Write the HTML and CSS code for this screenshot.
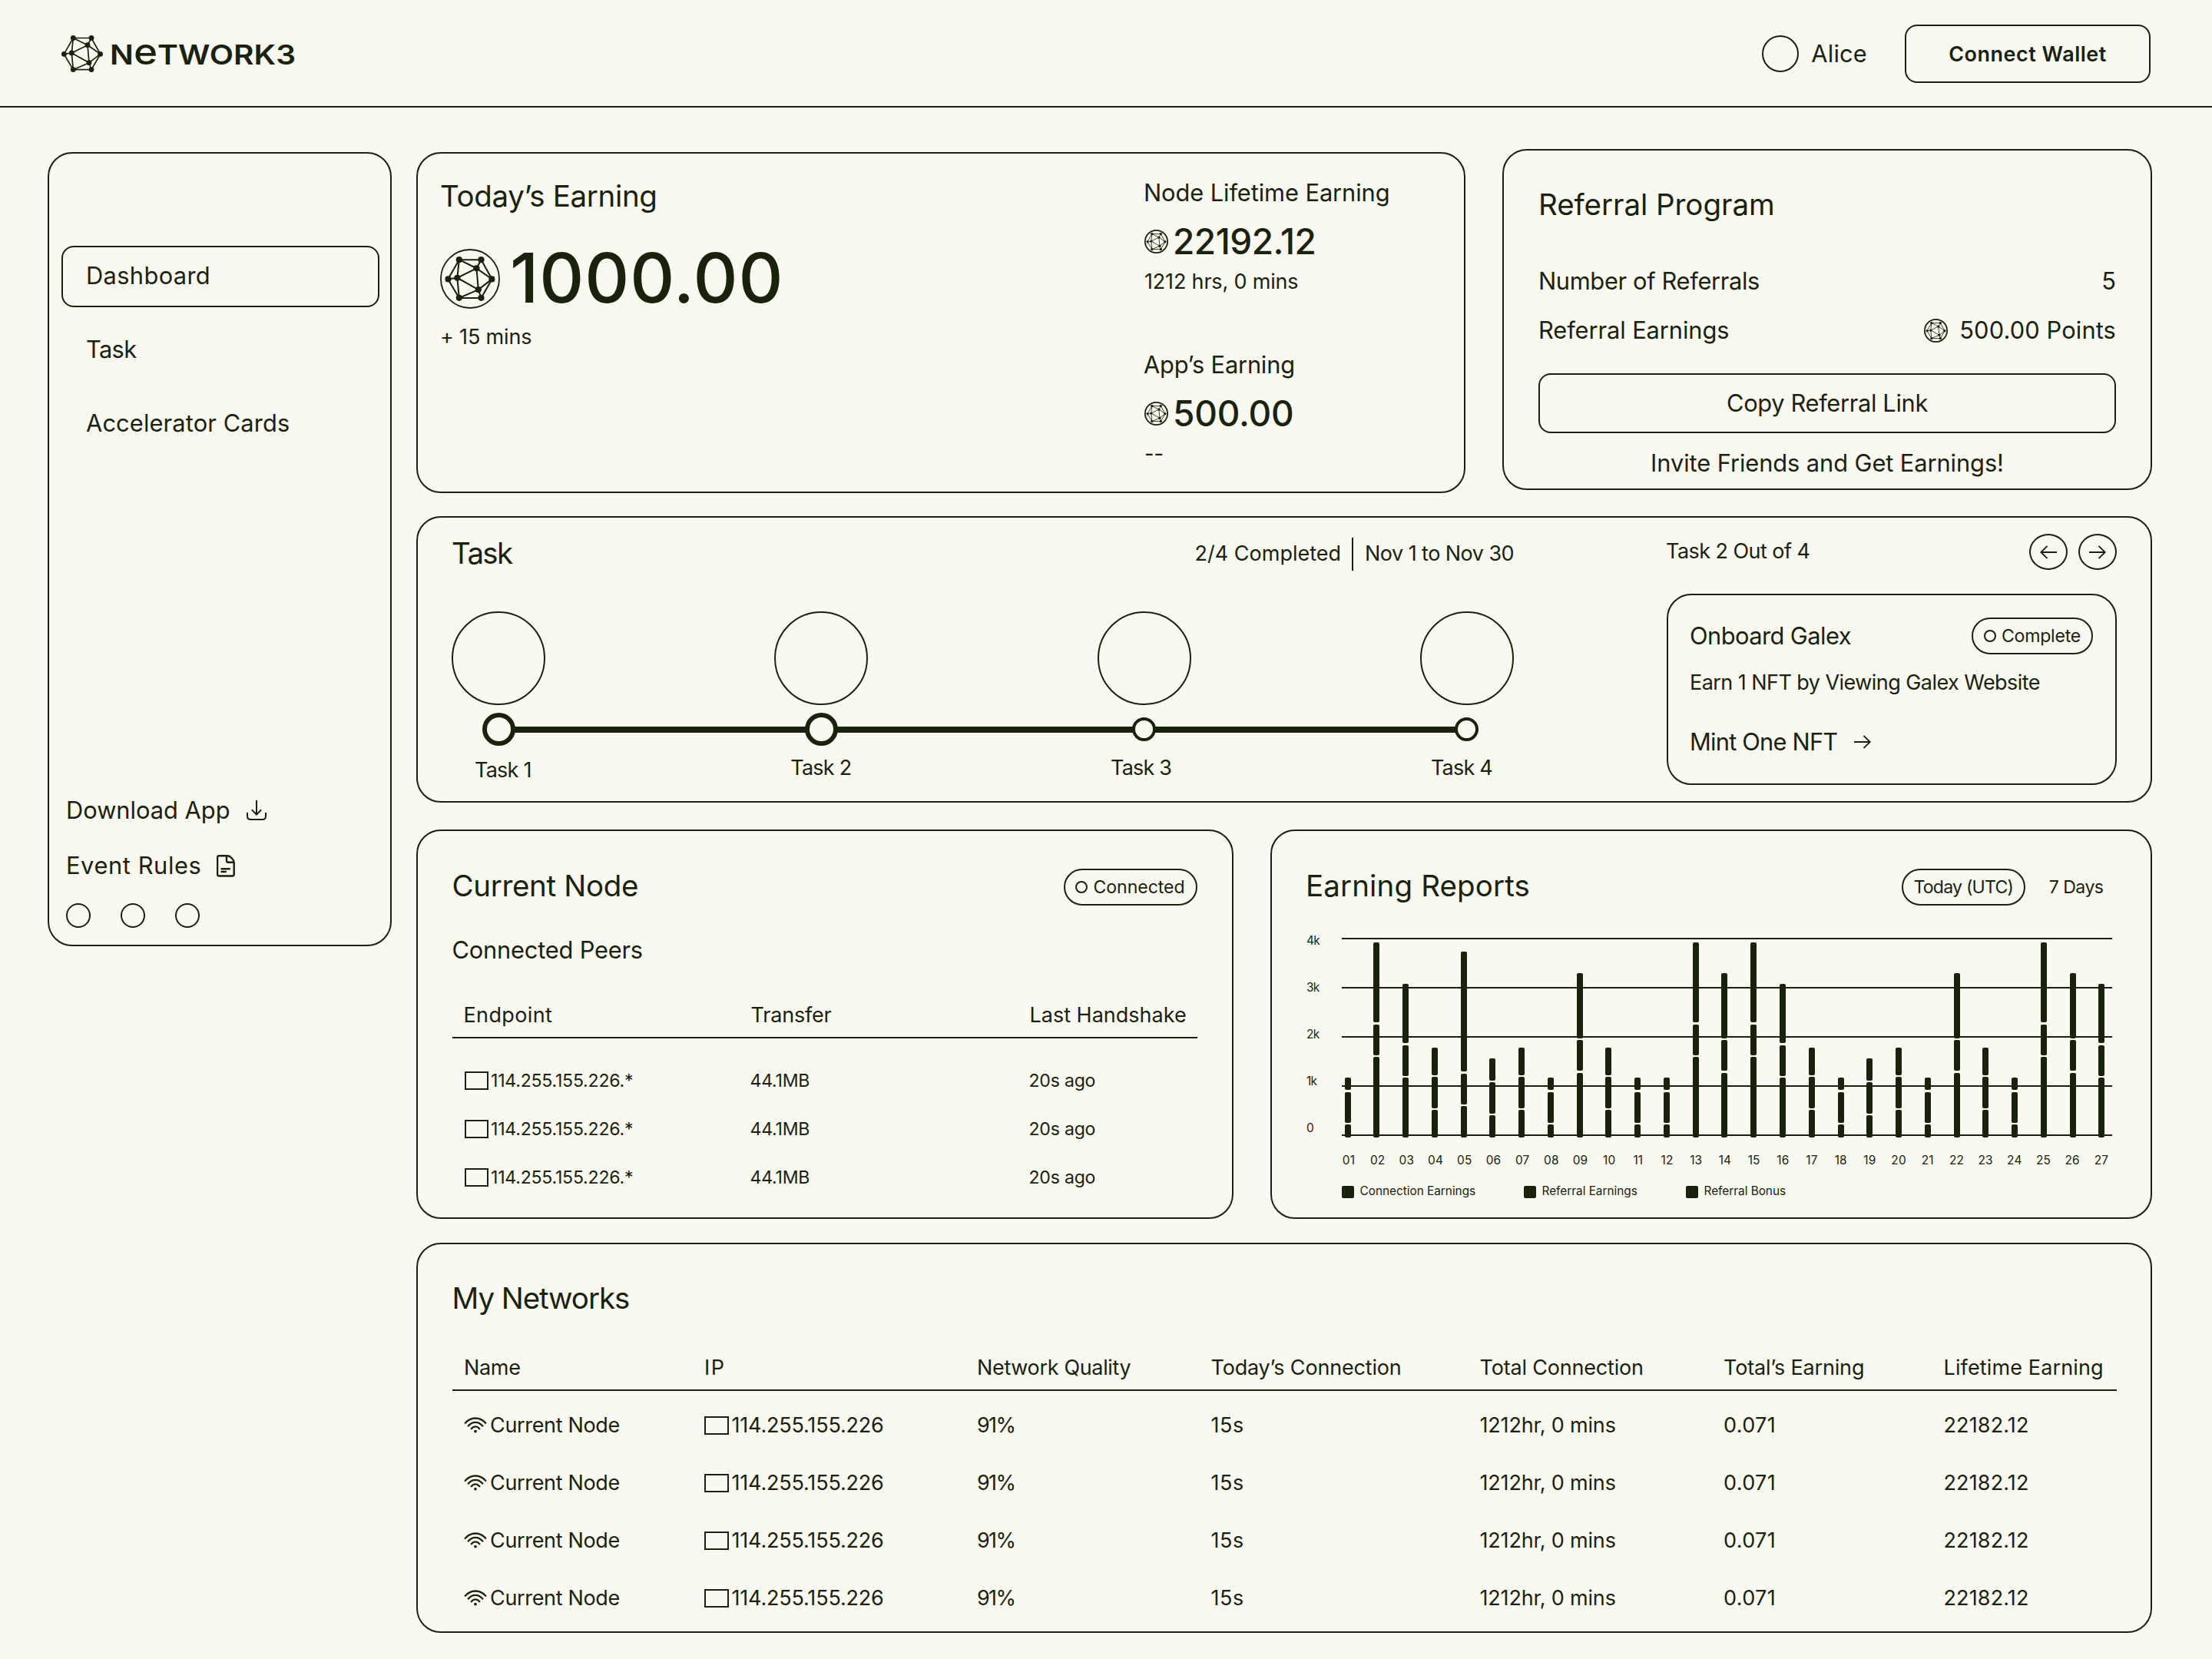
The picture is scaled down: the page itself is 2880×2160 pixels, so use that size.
FILE: index.html
```html
<!DOCTYPE html>
<html lang="en">
<head>
<meta charset="utf-8">
<title>Network3 Dashboard</title>
<link rel="stylesheet" href="styles.css">
</head>
<body>
<svg class="defs" width="0" height="0" aria-hidden="true">
  <defs>
    <symbol id="mesh" viewBox="0 0 54 48">
      <g fill="none" stroke="currentColor" stroke-width="1.7">
        <path d="M15.3 3.5H39L50.7 24.4 39 44.7H15.3L3.3 24.4Z"/>
        <path d="M15.3 3.5L34 12.7 39 3.5M34 12.7L50.7 24.4 36 35.7 34 12.7 13.3 23 36 35.7 39 44.7M36 35.7L15.3 44.7 13.3 23 3.3 24.4M13.3 23L15.3 3.5"/>
      </g>
      <g fill="currentColor">
        <circle cx="15.3" cy="3.5" r="3.4"/><circle cx="39" cy="3.5" r="3.4"/><circle cx="3.4" cy="24.4" r="3.4"/><circle cx="50.6" cy="24.4" r="3.4"/><circle cx="15.3" cy="44.6" r="3.4"/><circle cx="39" cy="44.6" r="3.4"/><circle cx="34" cy="12.7" r="3.4"/><circle cx="13.3" cy="23" r="3.4"/><circle cx="36" cy="35.7" r="3.4"/>
      </g>
    </symbol>
    <symbol id="coin" viewBox="0 0 78 78">
      <circle cx="39" cy="39" r="38" fill="none" stroke="currentColor" stroke-width="1.8"/>
      <use href="#mesh" x="6.3" y="9.9" width="65.3" height="58.1"/>
    </symbol>
    <symbol id="coin-small" viewBox="0 0 31 31">
      <circle cx="15.5" cy="15.5" r="14.6" fill="none" stroke="currentColor" stroke-width="1.8"/>
      <use href="#mesh" x="2.4" y="3.9" width="26.2" height="23.3"/>
    </symbol>
    <symbol id="arrow-right" viewBox="0 0 22 18">
      <path d="M0 9H20.5M12.5 .8L20.7 9 12.5 17.2" fill="none" stroke="currentColor" stroke-width="1.9"/>
    </symbol>
    <symbol id="arrow-left" viewBox="0 0 22 18">
      <path d="M22 9H1.5M9.5 .8L1.3 9 9.5 17.2" fill="none" stroke="currentColor" stroke-width="1.9"/>
    </symbol>
    <symbol id="wifi" viewBox="0 0 29 21">
      <g fill="none" stroke="currentColor" stroke-width="2.3" stroke-linecap="round">
        <path d="M1.3 7.8C8.5-.6 20.5-.6 27.7 7.8"/>
        <path d="M5.2 11.6C10.5 5.2 18.5 5.2 23.8 11.6"/>
        <path d="M9.2 15.2C12.3 11.4 16.7 11.4 19.8 15.2"/>
      </g>
      <circle cx="14.5" cy="18.6" r="1.9" fill="currentColor"/>
    </symbol>
  </defs>
</svg>

<header class="topbar">
  <a class="brand">
    <svg class="brand-mark"><use href="#mesh"/></svg>
    <span class="brand-name">N<span class="brand-e">e</span>TWORK3</span>
  </a>
  <div class="account">
    <span class="avatar"></span>
    <span class="s32 user">Alice</span>
    <button class="btn wallet">Connect Wallet</button>
  </div>
</header>

<div class="page">
  <aside class="sidebar">
    <nav class="nav">
      <a class="nav-item active s32 wide-3">Dashboard</a>
      <a class="nav-item s32 tight-6">Task</a>
      <a class="nav-item s32 wide-1">Accelerator Cards</a>
    </nav>
    <div class="side-foot">
      <a class="side-link s32 track-0">Download App
        <svg class="icon-dl" viewBox="0 0 26 26"><path d="M13 0V18.5M6.8 12.2L13 18.6 19.2 12.2M1 16V20.5Q1 25 5.5 25H20.5Q25 25 25 20.5V16" fill="none" stroke="currentColor" stroke-width="2"/></svg>
      </a>
      <a class="side-link s32 wide-5">Event Rules
        <svg class="icon-doc" viewBox="0 0 24 29"><path d="M3.2 1.2H14.5C17.5 1.2 22.7 6.5 22.7 10V25.3Q22.7 27.5 20.5 27.5H3.2Q1.1 27.5 1.1 25.3V3.3Q1.1 1.2 3.2 1.2ZM13 1.2V7.6Q13 9.8 15.2 9.8H22.5M6.5 18.2H16.8M6.5 22H11.8" fill="none" stroke="currentColor" stroke-width="2.4" stroke-linecap="round"/></svg>
      </a>
      <div class="socials"><i></i><i></i><i></i></div>
    </div>
  </aside>

  <main class="main">
    <div class="row-top">
      <section class="card earning">
        <div class="earning-main">
          <h2 class="s40 tight-3">Today’s Earning</h2>
          <div class="big"><svg class="coin-lg"><use href="#coin"/></svg><span class="s96">1000.00</span></div>
          <p class="s28">+ 15 mins</p>
        </div>
        <div class="earning-side">
          <div class="stat">
            <h3 class="s32">Node Lifetime Earning</h3>
            <div class="value"><svg class="coin-sm"><use href="#coin-small"/></svg><span class="s48">22192.12</span></div>
            <p class="s28">1212 hrs, 0 mins</p>
          </div>
          <div class="stat">
            <h3 class="s32 tight-2">App’s Earning</h3>
            <div class="value"><svg class="coin-sm"><use href="#coin-small"/></svg><span class="s48 tight-2">500.00</span></div>
            <p class="s28 track-0">--</p>
          </div>
        </div>
      </section>

      <section class="card referral">
        <h2 class="s40">Referral Program</h2>
        <div class="pair s32"><span class="tight-3">Number of Referrals</span><span class="track-0">5</span></div>
        <div class="pair pair-2 s32"><span>Referral Earnings</span><span class="points"><svg class="coin-sm"><use href="#coin-small"/></svg><span class="wide-1">500.00 Points</span></span></div>
        <button class="btn copy s32 tight-3">Copy Referral Link</button>
        <p class="invite s32">Invite Friends and Get Earnings!</p>
      </section>
    </div>

    <section class="card tasks">
      <div class="progress">
        <div class="progress-head">
          <h2 class="s40 tight-16">Task</h2>
          <div class="meta s28"><span class="track-0">2/4 Completed</span><i class="divider"></i><span class="tight-5">Nov 1 to Nov 30</span></div>
        </div>
        <div class="steps">
          <div class="step"><i class="disc"></i><i class="node done"></i></div>
          <div class="step"><i class="disc"></i><i class="node done"></i></div>
          <div class="step"><i class="disc"></i><i class="node"></i></div>
          <div class="step"><i class="disc"></i><i class="node"></i></div>
        </div>
        <div class="labels s28 tight-8"><span>Task 1</span><span>Task 2</span><span>Task 3</span><span>Task 4</span></div>
      </div>
      <div class="current">
        <div class="current-head">
          <span class="s28 tight-5">Task 2 Out of 4</span>
          <div class="arrows">
            <button class="round"><svg class="arrow"><use href="#arrow-left"/></svg></button>
            <button class="round"><svg class="arrow"><use href="#arrow-right"/></svg></button>
          </div>
        </div>
        <div class="task-card">
          <div class="task-title"><h3 class="s32 tight-5">Onboard Galex</h3><span class="pill complete s24"><i class="dot"></i>Complete</span></div>
          <p class="s28 tight-5">Earn 1 NFT by Viewing Galex Website</p>
          <a class="mint s32 tight-8">Mint One NFT<svg class="arrow"><use href="#arrow-right"/></svg></a>
        </div>
      </div>
    </section>

    <div class="row-mid">
      <section class="card node-card">
        <div class="card-head"><h2 class="s40 tight-3">Current Node</h2><span class="pill connected s24"><i class="dot"></i>Connected</span></div>
        <h3 class="s32 tight-2 peers-title">Connected Peers</h3>
        <div class="peers">
          <div class="peers-head s28"><span class="wide-3">Endpoint</span><span>Transfer</span><span class="track-0">Last Handshake</span></div>
          <div class="peers-row s24"><span class="ip"><i class="flag"></i>114.255.155.226.*</span><span>44.1MB</span><span>20s ago</span></div>
          <div class="peers-row s24"><span class="ip"><i class="flag"></i>114.255.155.226.*</span><span>44.1MB</span><span>20s ago</span></div>
          <div class="peers-row s24"><span class="ip"><i class="flag"></i>114.255.155.226.*</span><span>44.1MB</span><span>20s ago</span></div>
        </div>
      </section>

      <section class="card reports">
        <div class="card-head">
          <h2 class="s40 wide-1">Earning Reports</h2>
          <div class="range s24"><span class="pill today tight-8">Today (UTC)</span><span class="seven tight-5">7 Days</span></div>
        </div>
        <div class="chart">
          <div class="y-axis s16"><span>4k</span><span>3k</span><span>2k</span><span>1k</span><span>0</span></div>
          <div class="plot">
            <div class="grid"><i></i><i></i><i></i><i></i><i></i></div>
            <div class="bars">
              <div class="bar a"><i></i><i></i><i></i></div>
              <div class="bar b"><i></i><i></i><i></i></div>
              <div class="bar c"><i></i><i></i><i></i></div>
              <div class="bar d"><i></i><i></i><i></i></div>
              <div class="bar e"><i></i><i></i><i></i></div>
              <div class="bar f"><i></i><i></i><i></i></div>
              <div class="bar d"><i></i><i></i><i></i></div>
              <div class="bar a"><i></i><i></i><i></i></div>
              <div class="bar g"><i></i><i></i><i></i></div>
              <div class="bar d"><i></i><i></i><i></i></div>
              <div class="bar a"><i></i><i></i><i></i></div>
              <div class="bar a"><i></i><i></i><i></i></div>
              <div class="bar b"><i></i><i></i><i></i></div>
              <div class="bar g"><i></i><i></i><i></i></div>
              <div class="bar b"><i></i><i></i><i></i></div>
              <div class="bar c"><i></i><i></i><i></i></div>
              <div class="bar d"><i></i><i></i><i></i></div>
              <div class="bar a"><i></i><i></i><i></i></div>
              <div class="bar f"><i></i><i></i><i></i></div>
              <div class="bar d"><i></i><i></i><i></i></div>
              <div class="bar a"><i></i><i></i><i></i></div>
              <div class="bar g"><i></i><i></i><i></i></div>
              <div class="bar d"><i></i><i></i><i></i></div>
              <div class="bar a"><i></i><i></i><i></i></div>
              <div class="bar b"><i></i><i></i><i></i></div>
              <div class="bar g"><i></i><i></i><i></i></div>
              <div class="bar c"><i></i><i></i><i></i></div>
            </div>
          </div>
        </div>
        <div class="x-axis s16"><span>01</span><span>02</span><span>03</span><span>04</span><span>05</span><span>06</span><span>07</span><span>08</span><span>09</span><span>10</span><span>11</span><span>12</span><span>13</span><span>14</span><span>15</span><span>16</span><span>17</span><span>18</span><span>19</span><span>20</span><span>21</span><span>22</span><span>23</span><span>24</span><span>25</span><span>26</span><span>27</span></div>
        <div class="legend s16"><span><i></i>Connection Earnings</span><span><i></i>Referral Earnings</span><span><i></i>Referral Bonus</span></div>
      </section>
    </div>

    <section class="card networks">
      <h2 class="s40 tight-11">My Networks</h2>
      <div class="table s28">
        <div class="tr th"><span class="tight-3">Name</span><span class="wide-15">IP</span><span class="tight-3">Network Quality</span><span>Today’s Connection</span><span>Total Connection</span><span>Total’s Earning</span><span class="wide-1">Lifetime Earning</span></div>
        <div class="tr"><span class="name tight-3"><svg class="wifi"><use href="#wifi"/></svg>Current Node</span><span class="ip"><i class="flag"></i>114.255.155.226</span><span class="tight-16">91%</span><span class="wide-5">15s</span><span>1212hr, 0 mins</span><span class="wide-3">0.071</span><span class="wide-1">22182.12</span></div>
        <div class="tr"><span class="name tight-3"><svg class="wifi"><use href="#wifi"/></svg>Current Node</span><span class="ip"><i class="flag"></i>114.255.155.226</span><span class="tight-16">91%</span><span class="wide-5">15s</span><span>1212hr, 0 mins</span><span class="wide-3">0.071</span><span class="wide-1">22182.12</span></div>
        <div class="tr"><span class="name tight-3"><svg class="wifi"><use href="#wifi"/></svg>Current Node</span><span class="ip"><i class="flag"></i>114.255.155.226</span><span class="tight-16">91%</span><span class="wide-5">15s</span><span>1212hr, 0 mins</span><span class="wide-3">0.071</span><span class="wide-1">22182.12</span></div>
        <div class="tr"><span class="name tight-3"><svg class="wifi"><use href="#wifi"/></svg>Current Node</span><span class="ip"><i class="flag"></i>114.255.155.226</span><span class="tight-16">91%</span><span class="wide-5">15s</span><span>1212hr, 0 mins</span><span class="wide-3">0.071</span><span class="wide-1">22182.12</span></div>
      </div>
    </section>
  </main>
</div>
</body>
</html>
```
FILE: styles.css
```css
:root { --ink: #1a210d; --paper: #faf9f1; }
* { box-sizing: border-box; }
body { margin: 0; width: 2880px; height: 2160px; overflow: hidden; background: var(--paper); color: var(--ink); font-family: Inter, "Liberation Sans", sans-serif; white-space: nowrap; }
h2, h3, p { margin: 0; font-weight: 400; }
i { display: block; font-style: normal; }
svg { display: block; flex: none; }
button { font-family: inherit; color: inherit; background: none; padding: 0; }
.defs { position: absolute; }

/* type scale */
.s96 { font-size: 90px; line-height: 76px; font-weight: 500; letter-spacing: .9px; }
.s48 { font-size: 46px; line-height: 56px; font-weight: 500; letter-spacing: -.51px; }
.s40 { font-size: 38.5px; line-height: 48px; letter-spacing: -.06px; }
.s32 { font-size: 30.8px; line-height: 38px; letter-spacing: -.08px; }
.s28 { font-size: 27px; line-height: 34px; letter-spacing: -.18px; }
.s24 { font-size: 23.1px; line-height: 30px; letter-spacing: -.23px; }
.s16 { font-size: 15.4px; line-height: 20px; letter-spacing: -.03px; }

/* tracking, in tenths of a pixel */
.track-0 { letter-spacing: 0; }
.wide-1 { letter-spacing: .13px; }
.wide-3 { letter-spacing: .36px; }
.wide-5 { letter-spacing: .6px; }
.wide-15 { letter-spacing: 1.5px; }
.tight-2 { letter-spacing: -.2px; }
.tight-3 { letter-spacing: -.34px; }
.tight-5 { letter-spacing: -.55px; }
.tight-6 { letter-spacing: -.65px; }
.tight-8 { letter-spacing: -.78px; }
.tight-11 { letter-spacing: -1.07px; }
.tight-16 { letter-spacing: -1.65px; }

/* shared */
.card { border: 2px solid var(--ink); border-radius: 32px; }
.btn { border: 2px solid var(--ink); border-radius: 16px; }
.pill { display: flex; align-items: center; justify-content: center; height: 48px; border: 2px solid var(--ink); border-radius: 24px; }
.dot { width: 16px; height: 16px; border: 2px solid var(--ink); border-radius: 50%; margin-right: 7px; }
.flag { flex: none; width: 32px; height: 24px; border: 2px solid var(--ink); }
.coin-sm { width: 31px; height: 31px; }
.arrow { width: 22px; height: 18px; }

/* header */
.topbar { display: flex; justify-content: space-between; align-items: center; height: 140px; padding: 0 80px; border-bottom: 2px solid var(--ink); }
.brand { display: flex; align-items: center; gap: 9px; padding-top: 2px; }
.brand-mark { width: 54px; height: 48px; }
.brand-name { padding-top: 1px; font-weight: 600; font-size: 36px; line-height: 48px; transform: scaleX(1.13); transform-origin: left; }
.brand-e { font-size: 47px; line-height: 1px; font-weight: 500; }
.account { display: flex; align-items: center; padding-top: 2px; }
.avatar { width: 48px; height: 48px; border: 2px solid var(--ink); border-radius: 50%; }
.user { margin-left: 16px; letter-spacing: .19px; }
.wallet { width: 320px; height: 76px; margin-left: 49px; font-size: 27px; font-weight: 600; letter-spacing: .5px; }

/* layout */
.page { display: flex; align-items: flex-start; gap: 32px; padding: 58px 78px 0 62px; }
.sidebar { display: flex; flex-direction: column; justify-content: space-between; width: 448px; height: 1034px; padding: 120px 14px 22px 16px; border: 2px solid var(--ink); border-radius: 32px; }
.nav { display: flex; flex-direction: column; gap: 16px; }
.nav-item { display: flex; align-items: center; height: 80px; padding: 0 0 2px 30px; border: 2px solid transparent; border-radius: 16px; }
.nav-item.active { border-color: var(--ink); }
.side-foot { display: flex; flex-direction: column; padding-left: 6px; }
.side-link { display: flex; align-items: center; height: 38px; margin-bottom: 34px; }
.side-link:nth-child(2) { margin-bottom: 30px; }
.icon-dl { width: 26px; height: 26px; margin-left: 21px; }
.icon-doc { width: 24px; height: 29px; margin-left: 20px; }
.socials { display: flex; gap: 39px; }
.socials i { width: 32px; height: 32px; border: 2px solid var(--ink); border-radius: 50%; }
.main { width: 2260px; }

/* earning */
.row-top { display: flex; gap: 48px; height: 444px; }
.earning { display: flex; justify-content: space-between; width: 1366px; height: 444px; padding: 31px 96px 0 29px; }
.big { display: flex; gap: 13px; margin-top: 45px; }
.coin-lg { width: 78px; height: 78px; }
.earning-main p { margin-top: 20px; }
.earning-side { display: flex; flex-direction: column; gap: 72px; width: 320px; padding-top: 1px; }
.value { display: flex; align-items: center; gap: 6px; margin-top: 16px; }
.stat h3 { margin-left: -1px; }
.stat p { margin-top: 8px; }

/* referral */
.referral { width: 846px; height: 444px; margin-top: -4px; padding: 46px 45px 0; }
.pair { display: flex; justify-content: space-between; margin-top: 57px; }
.pair-2 { margin-top: 26px; }
.points { display: flex; align-items: center; gap: 15px; }
.copy { display: block; width: 752px; height: 78px; margin-top: 37px; }
.invite { margin-top: 20px; text-align: center; }

/* tasks */
.tasks { display: flex; justify-content: space-between; height: 373px; margin-top: 30px; padding: 0 44px; }
.progress { width: 1383px; padding-top: 25px; }
.progress-head { display: flex; justify-content: space-between; align-items: center; height: 43px; }
.progress-head h2 { padding-bottom: 1px; }
.meta { display: flex; align-items: center; }
.divider { width: 2px; height: 43px; margin: 0 15px 0 14px; background: var(--ink); position: relative; top: 1px; }
.steps { position: relative; display: flex; justify-content: space-between; margin-top: 54px; }
.steps::before { content: ""; position: absolute; left: 61px; right: 61px; bottom: 17.5px; height: 8px; background: var(--ink); }
.step { display: flex; flex-direction: column; align-items: center; width: 122px; }
.disc { width: 122px; height: 122px; border: 2px solid var(--ink); border-radius: 50%; }
.node { position: relative; width: 31px; height: 31px; margin: 16px 0 6px; border: 4px solid var(--ink); border-radius: 50%; background: var(--paper); }
.node.done { width: 43px; height: 43px; margin: 10px 0 0; border-width: 6px; }
.labels { display: flex; justify-content: space-between; margin-top: 12px; padding: 0 28px 0 30px; }
.labels span:first-child { padding-top: 3px; }
.current { width: 586px; padding-top: 21px; }
.current-head { display: flex; justify-content: space-between; align-items: center; height: 47px; }
.current-head > span { padding-bottom: 2px; margin-left: -1px; }
.arrows { display: flex; gap: 14px; }
.round { display: flex; align-items: center; justify-content: center; width: 50px; height: 47px; border: 2px solid var(--ink); border-radius: 50%; }
.task-card { height: 248.5px; margin-top: 31px; padding: 29px 29px 0 28px; border: 2px solid var(--ink); border-radius: 32px; }
.task-title { display: flex; justify-content: space-between; align-items: center; height: 48px; }
.task-title h3 { padding-bottom: 1px; }
.complete { width: 158px; }
.task-card p { margin: 19.5px 0 0; }
.mint { display: flex; align-items: center; margin: 41px 0 0; }
.mint .arrow { margin-left: 22px; }

/* current node and reports */
.row-mid { display: flex; justify-content: space-between; margin-top: 35px; }
.card-head { display: flex; justify-content: space-between; height: 48px; }
.card-head h2 { margin-top: -2px; }
.node-card { width: 1063.5px; height: 507px; padding: 48.5px 45px 0 44.5px; }
.connected { width: 174px; letter-spacing: -.05px; }
.peers-title { margin-top: 39px; }
.peers-head, .peers-row { display: grid; grid-template-columns: 374px 363px 1fr; padding-left: 15px; }
.peers-head { height: 47px; margin-top: 49px; margin-bottom: 24px; border-bottom: 2px solid var(--ink); }
.peers-row { height: 63px; align-items: center; }
.peers-row span { margin-left: -1px; }
.peers-row .ip { margin-left: 1px; }
.peers-row .flag { width: 31px; }
.ip { display: flex; align-items: center; gap: 3.5px; }
.reports { width: 1148px; height: 507px; padding: 48.5px 44px 0; }
.range { display: flex; align-items: center; }
.today { width: 161px; }
.seven { margin: 0 17.5px 0 31px; }
.chart { display: flex; height: 259.7px; margin-top: 42.5px; }
.y-axis { width: 46.5px; margin-top: -27px; padding-left: 1px; letter-spacing: -.7px; }
.y-axis span { display: block; height: 61px; line-height: 61px; }
.plot { display: grid; width: 1003px; }
.grid { grid-area: 1 / 1; display: flex; flex-direction: column; justify-content: space-between; height: 258px; }
.grid i { height: 2px; background: var(--ink); }
.bars { grid-area: 1 / 1; display: flex; justify-content: space-between; align-items: flex-end; padding: 0 9px 0 4px; z-index: 1; }
.bar { display: flex; flex-direction: column; gap: 2.2px; width: 8px; }
.bar i { height: 40.5px; border-radius: 2px; background: var(--ink); }
.a i:nth-child(odd) { height: 16.5px; }
.b i:nth-child(odd) { height: 104.5px; }
.c i:nth-child(odd) { height: 77.4px; }
.d i:nth-child(odd) { height: 35.7px; }
.e i:first-child { height: 156.5px; }
.f i:nth-child(odd) { height: 29px; }
.g i:nth-child(odd) { height: 84.2px; }
.x-axis { display: flex; justify-content: space-between; margin: 20px 9px 0 45px; letter-spacing: .15px; }
.x-axis span { width: 22px; text-align: center; }
.legend { display: grid; grid-template-columns: 237px 211px auto; margin: 20px 0 0 46.5px; }
.legend span { display: flex; align-items: center; gap: 8px; }
.legend i { width: 16px; height: 16px; border-radius: 2px; background: var(--ink); position: relative; top: 1px; }

/* networks */
.networks { height: 508px; margin-top: 31px; padding: 46px 44.5px 0; }
.tr { display: grid; grid-template-columns: 313px 355px 304.5px 350px 317.5px 286.5px 1fr; align-items: center; height: 75px; padding-left: 15.5px; }
.th { height: 48px; margin: 49px 0 7px; padding-bottom: 11px; border-bottom: 2px solid var(--ink); }
.name { display: flex; align-items: center; gap: 4px; }
.wifi { width: 30px; height: 21px; }
```
